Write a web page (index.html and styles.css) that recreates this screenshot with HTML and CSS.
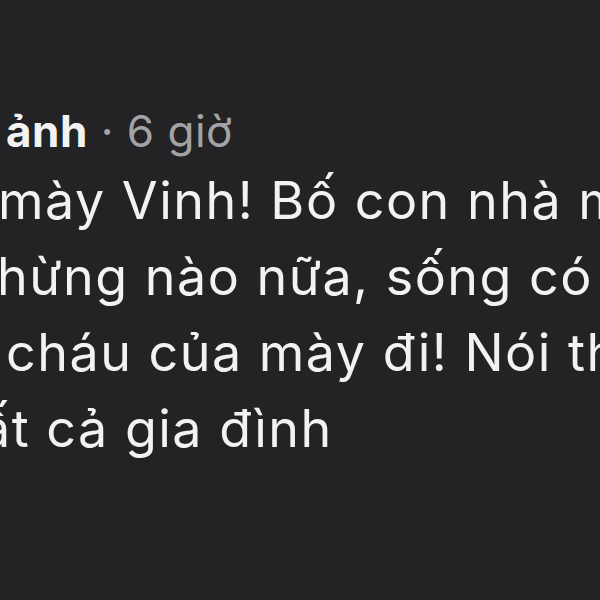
FILE: index.html
```html
<!DOCTYPE html>
<html lang="vi">
<head>
<meta charset="utf-8">
<link rel="stylesheet" href="styles.css">
</head>
<body>
<div class="comment">
  <div class="head"><span class="name">ảnh</span><span class="meta"> · 6 giờ</span></div>
  <div class="line l1">mày Vinh! Bố con nhà mày</div>
  <div class="line l2">hừng nào nữa, sống có đức</div>
  <div class="line l3">cháu của mày đi! Nói thật</div>
  <div class="line l4">ất cả gia đình</div>
</div>
</body>
</html>
```
FILE: styles.css
```css
html, body {
  margin: 0;
  padding: 0;
  width: 600px;
  height: 600px;
  overflow: hidden;
  background: #232325;
}
.comment {
  padding-top: 100px;
  font-family: Inter, "Noto Sans", sans-serif;
  color: #f2f2f2;
}
.head {
  white-space: nowrap;
  font-size: 44px;
  line-height: 63px;
  margin-left: 6px;
  letter-spacing: 0.5px;
}
.name {
  font-weight: 700;
}
.meta {
  color: #a3a3a5;
}
.line {
  white-space: nowrap;
  font-size: 52px;
  line-height: 76px;
  letter-spacing: 1.5px;
}
.l1 { margin-left: -2px; }
.l2 { margin-left: -3px; }
.l3 { margin-left: 6px; }
.l4 { margin-left: -19px; }
```
